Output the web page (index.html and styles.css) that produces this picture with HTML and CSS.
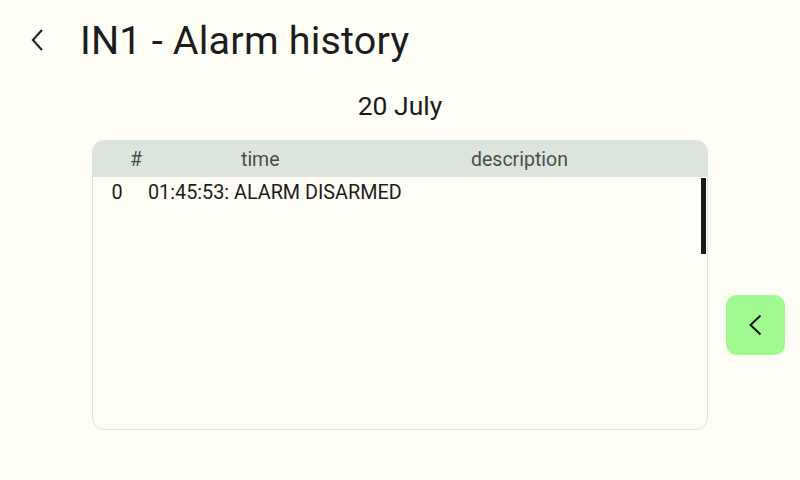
FILE: index.html
```html
<!DOCTYPE html>
<html lang="en">
<head>
  <meta charset="UTF-8">
  <title>IN1 - Alarm history</title>
  <link rel="stylesheet" href="styles.css">
</head>
<body>
  <div class="screen">
    <header class="top">
      <button class="back" aria-label="Back">
        <svg width="14" height="22" viewBox="0 0 14 22"><path d="M11 1 L1.8 11 L11 21" fill="none" stroke="#1c1c1c" stroke-width="2"/></svg>
      </button>
      <h1>IN1 - Alarm history</h1>
    </header>

    <div class="day">20 July</div>

    <div class="content">
      <div class="table">
        <div class="thead">
          <span class="c-num">#</span>
          <span class="c-time">time</span>
          <span class="c-desc">description</span>
        </div>
        <div class="tbody">
          <div class="row">
            <span class="r-num">0</span>
            <span class="r-text">01:45:53: ALARM DISARMED</span>
          </div>
          <div class="scrollbar"></div>
        </div>
      </div>

      <button class="prev" aria-label="Previous day">
        <svg width="16" height="24" viewBox="0 0 16 24"><path d="M12.5 2.5 L2.5 12 L12.5 21.5" fill="none" stroke="#111" stroke-width="2"/></svg>
      </button>
    </div>
  </div>
</body>
</html>
```

FILE: styles.css
```css
body {
  margin: 0;
  background: #fefef6;
  font-family: Roboto, "Noto Sans", sans-serif;
  color: #1c1c1c;
}
.screen {
  width: 800px;
  height: 480px;
  display: flex;
  flex-direction: column;
}
.top {
  display: flex;
  align-items: center;
  height: 80px;
  padding-left: 28px;
}
.back {
  background: none;
  border: none;
  padding: 0;
  width: 22px;
  height: 24px;
  display: flex;
  align-items: center;
  cursor: pointer;
}
.back svg {
  margin-left: 3px;
}
h1 {
  margin: 0 0 0 30px;
  font-size: 39.5px;
  font-weight: 400;
  letter-spacing: 0.2px;
}
.day {
  text-align: center;
  font-size: 26.5px;
  height: 52px;
  line-height: 52px;
}
.content {
  display: flex;
  align-items: flex-start;
  padding-left: 92px;
  margin-top: 8px;
}
.table {
  width: 614px;
  height: 288px;
  border: 1px solid #e2e2dc;
  border-radius: 12px;
  overflow: hidden;
  display: flex;
  flex-direction: column;
}
.thead {
  background: #dce5dc;
  height: 36px;
  display: grid;
  grid-template-columns: 86px 164px 1fr;
  align-items: center;
  font-size: 19.5px;
  color: #4a4d4a;
}
.c-num { text-align: center; }
.c-time { padding-left: 62px; }
.c-desc { padding-left: 128px; }
.tbody {
  flex: 1;
  position: relative;
}
.row {
  display: flex;
  font-size: 19.8px;
  color: #1c1c1c;
  padding-top: 4px;
}
.r-num {
  width: 48px;
  text-align: center;
}
.r-text {
  padding-left: 7px;
}
.scrollbar {
  position: absolute;
  right: 1px;
  top: 1px;
  width: 5px;
  height: 76px;
  background: #1a1a1a;
}
.prev {
  margin: 155px 0 0 18px;
  width: 59px;
  height: 60px;
  background: #a0fa90;
  border: none;
  border-radius: 11px;
  display: flex;
  align-items: center;
  justify-content: center;
  cursor: pointer;
  padding: 0;
}
```
